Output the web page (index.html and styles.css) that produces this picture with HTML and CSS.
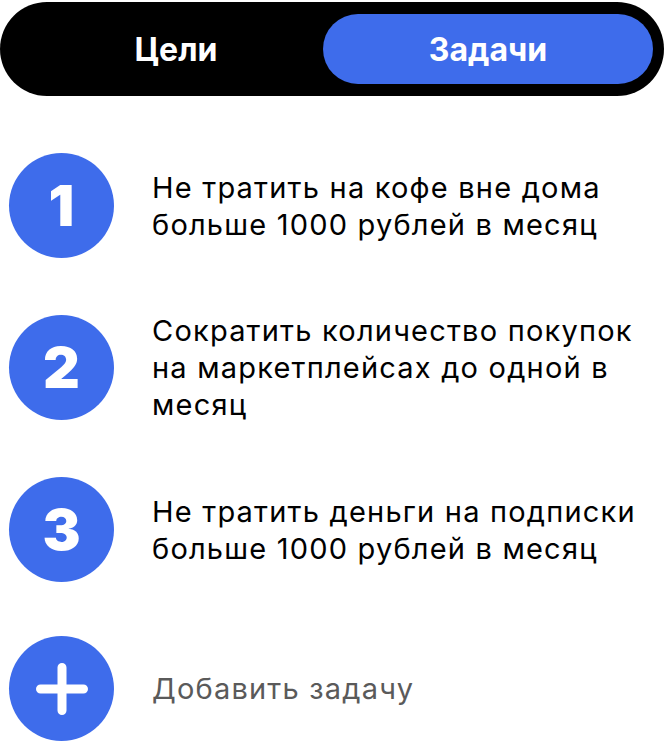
FILE: index.html
```html
<!DOCTYPE html>
<html lang="ru">
<head>
<meta charset="utf-8">
<title>Задачи</title>
<link rel="stylesheet" href="styles.css">
</head>
<body>
<div class="page">
  <div class="toggle">
    <div class="tab">Цели</div>
    <div class="tab active">Задачи</div>
  </div>
  <ul class="list">
    <li class="item">
      <div class="badge">1</div>
      <div class="text">Не тратить на кофе вне дома больше 1000 рублей в месяц</div>
    </li>
    <li class="item">
      <div class="badge">2</div>
      <div class="text">Сократить количество покупок на маркетплейсах до одной в месяц</div>
    </li>
    <li class="item">
      <div class="badge">3</div>
      <div class="text">Не тратить деньги на подписки больше 1000 рублей в месяц</div>
    </li>
    <li class="item add">
      <div class="badge plus">
        <svg width="52" height="52" viewBox="0 0 52 52"><path d="M26 4.5V47.5M4.5 26H47.5" stroke="#fff" stroke-width="9" stroke-linecap="round" fill="none"/></svg>
      </div>
      <div class="text muted">Добавить задачу</div>
    </li>
  </ul>
</div>
</body>
</html>
```

FILE: styles.css
```css
html, body {
  margin: 0;
  padding: 0;
  background: #fff;
}
.page {
  width: 666px;
  padding-top: 2px;
  font-family: Inter, "Noto Sans", sans-serif;
}
.toggle {
  width: 664px;
  height: 94px;
  box-sizing: border-box;
  background: #000;
  border-radius: 47px;
  padding: 12px 11px 12px 11px;
  display: grid;
  grid-template-columns: 1fr 330px;
}
.tab {
  display: flex;
  align-items: center;
  justify-content: center;
  color: #fff;
  font-weight: 700;
  font-size: 32px;
  border-radius: 35px;
}
.tab:first-child {
  padding-left: 18px;
}
.tab.active {
  background: #3e6ceb;
}
.list {
  list-style: none;
  margin: 57px 0 0 0;
  padding: 0 14px 0 9px;
  display: flex;
  flex-direction: column;
  gap: 54px;
}
.item {
  display: flex;
  align-items: center;
  gap: 38px;
}
.badge {
  flex: 0 0 105px;
  width: 105px;
  height: 105px;
  border-radius: 50%;
  background: #3e6ceb;
  color: #fff;
  font-weight: 900;
  font-size: 57px;
  display: flex;
  align-items: center;
  justify-content: center;
  line-height: 1;
}
.text {
  flex: 1;
  font-size: 29px;
  line-height: 37px;
  letter-spacing: 1.2px;
  color: #000;
}
.text.muted {
  color: #5a5a5a;
}
```
